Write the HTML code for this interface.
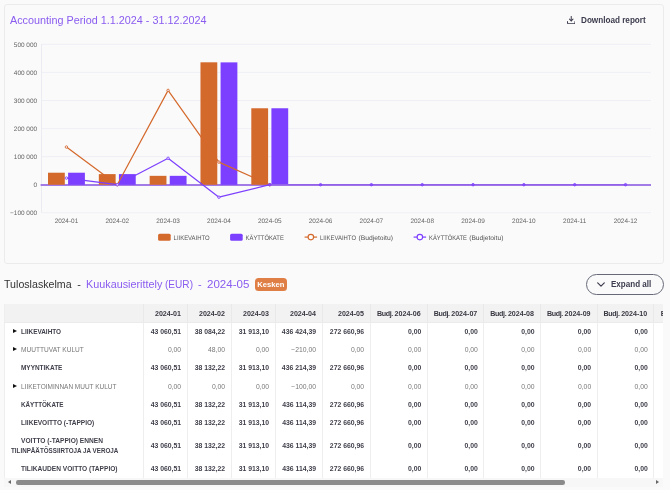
<!DOCTYPE html>
<html lang="en"><head><meta charset="utf-8"><title>Accounting Period report</title>
<style>
html,body{margin:0;padding:0;}
body{width:670px;height:490px;overflow:hidden;background:#fafafa;font-family:"Liberation Sans",sans-serif;color:#333;position:relative;}
#root{position:absolute;left:0;top:0;width:670px;height:490px;will-change:transform;}
.sx{display:inline-block;transform-origin:0 50%;white-space:nowrap;}
.card{position:absolute;left:4px;top:4px;width:658px;height:257.6px;border:1px solid #ebebeb;border-radius:3px;background:#fafafa;box-sizing:content-box;}
.title{position:absolute;left:9.7px;top:13px;font-size:11.3px;line-height:14px;color:#8a5cf0;white-space:nowrap;}
.title .sx{transform:scaleX(0.957);}
.dl{position:absolute;left:566.5px;top:14px;height:12px;display:flex;align-items:center;font-weight:bold;font-size:8.2px;color:#3b3b4d;white-space:nowrap;}
.dl svg{display:block;margin-right:5.8px;}
.dl .sx{transform:scaleX(0.995);}
svg.chart{position:absolute;left:0;top:0;}
svg.chart text{text-rendering:geometricPrecision;}
svg.chart text.ax{font-family:"Liberation Sans",sans-serif;font-size:6.45px;fill:#666;}
svg.chart text.lg{font-family:"Liberation Sans",sans-serif;font-size:6.6px;fill:#555;}
.h2{position:absolute;left:4px;top:276.5px;font-size:10.9px;line-height:14px;color:#333;white-space:nowrap;}
.h2 span{position:absolute;top:0;white-space:nowrap;transform-origin:0 50%;}
.h2 .p{color:#8a5cf0;}
.badge{position:absolute;left:254.5px;top:278px;width:32.6px;height:13.3px;border-radius:3.5px;background:#e07f45;color:#fff;font-weight:bold;font-size:7.6px;line-height:13.4px;text-align:center;}
.btn{position:absolute;left:585.5px;top:274.1px;width:76.4px;height:18.6px;border:1.1px solid #666a78;border-radius:11px;box-sizing:content-box;}
.btn svg{position:absolute;left:10.3px;top:7.1px;}
.btn span{position:absolute;left:24.1px;top:0;line-height:18.8px;font-weight:bold;font-size:8.3px;color:#3b3b4d;white-space:nowrap;transform:scaleX(0.97);transform-origin:0 50%;}
.wrap{position:absolute;left:4px;top:304px;width:658.6px;height:183px;overflow:hidden;}
table.tb{border-collapse:separate;border-spacing:0;table-layout:fixed;width:705.9px;background:#fff;font-size:6.95px;}
.tb th{background:#f2f2f2;height:18.4px;padding:1.3px 6.0px 0 0;text-align:right;font-weight:bold;font-size:7.1px;color:#393944;border-left:1px solid #e9e9e9;box-sizing:border-box;white-space:nowrap;overflow:hidden;}
.tb th .bj{letter-spacing:-0.36px;}
.tb th.first{border-left:1px solid #eeeeee;}
.tb td{height:18.2px;padding:0 5.9px 0 0;text-align:right;border-left:1px solid #eeeeee;box-sizing:border-box;white-space:nowrap;overflow:hidden;}
.tb tr.tall td{height:28.2px;}
.tb td:nth-child(n+7){padding-right:5.4px;}
.tb tbody tr:first-child td{border-top:1px solid #ebebeb;}
.tb td.first{text-align:left;padding:0;border-left:1px solid #eeeeee;}
.tb tr.b td{font-weight:bold;color:#3f3f4b;font-size:6.85px;}
.tb tr.g td{color:#787878;font-size:6.8px;}
.tb tr.g td.first{color:#777;}
.l1,.l2{padding-left:5.5px;line-height:9.8px;height:9.8px;white-space:nowrap;}
.lb{display:inline-block;transform-origin:0 50%;}
.tb tr.b .lb{font-size:6.7px;transform:scaleX(0.98);}
.tb tr.b .l2 .lb{transform:scaleX(0.937);}
.tb tr.g .lb{font-size:6.8px;transform:scaleX(0.98);}
.ar{display:inline-block;width:10.1px;height:4.8px;position:relative;vertical-align:-0.2px;}
.ar.on:after{content:"";position:absolute;left:2.7px;top:0;width:0;height:0;border-top:2.4px solid transparent;border-bottom:2.4px solid transparent;border-left:4px solid #111;}
.sb{position:absolute;left:4px;top:478px;width:658.6px;height:9px;background:#f7f7f7;}
.sb .thumb{position:absolute;left:11.5px;top:2.4px;width:549px;height:4.4px;border-radius:2.2px;background:#8b8b8b;}
.sb .la{position:absolute;left:3.9px;top:2.1px;width:0;height:0;border-top:2.4px solid transparent;border-bottom:2.4px solid transparent;border-right:3.5px solid #666;}
.sb .ra{position:absolute;right:3.3px;top:2.2px;width:0;height:0;border-top:2.3px solid transparent;border-bottom:2.3px solid transparent;border-left:3.5px solid #666;}
</style></head><body><div id="root">
<div class="card"></div>
<svg class="chart" width="670" height="264" viewBox="0 0 670 264">
<line x1="41.2" x2="651" y1="44.40" y2="44.40" stroke="#ededf5" stroke-width="0.9"/>
<text x="37.1" y="47.05" text-anchor="end" class="ax">500 000</text>
<line x1="41.2" x2="651" y1="72.45" y2="72.45" stroke="#ededf5" stroke-width="0.9"/>
<text x="37.1" y="75.10" text-anchor="end" class="ax">400 000</text>
<line x1="41.2" x2="651" y1="100.50" y2="100.50" stroke="#ededf5" stroke-width="0.9"/>
<text x="37.1" y="103.15" text-anchor="end" class="ax">300 000</text>
<line x1="41.2" x2="651" y1="128.55" y2="128.55" stroke="#ededf5" stroke-width="0.9"/>
<text x="37.1" y="131.20" text-anchor="end" class="ax">200 000</text>
<line x1="41.2" x2="651" y1="156.60" y2="156.60" stroke="#ededf5" stroke-width="0.9"/>
<text x="37.1" y="159.25" text-anchor="end" class="ax">100 000</text>
<line x1="41.2" x2="651" y1="184.65" y2="184.65" stroke="#ededf5" stroke-width="0.9"/>
<text x="37.1" y="186.90" text-anchor="end" class="ax">0</text>
<line x1="41.2" x2="651" y1="212.70" y2="212.70" stroke="#ededf5" stroke-width="0.9"/>
<text x="37.1" y="215.35" text-anchor="end" class="ax">−100 000</text>
<line x1="41.5" x2="41.5" y1="44.3" y2="212.9" stroke="#e9e9f0" stroke-width="0.9"/>
<line x1="40.6" x2="651" y1="184.9" y2="184.9" stroke="#a27be6" stroke-width="2"/>
<rect x="48.00" y="172.71" width="16.8" height="12.09" fill="#d4692c"/>
<rect x="68.10" y="172.71" width="16.8" height="12.09" fill="#7c3fff"/>
<rect x="98.83" y="174.11" width="16.8" height="10.69" fill="#d4692c"/>
<rect x="118.93" y="174.10" width="16.8" height="10.70" fill="#7c3fff"/>
<rect x="149.65" y="175.84" width="16.8" height="8.96" fill="#d4692c"/>
<rect x="169.75" y="175.84" width="16.8" height="8.96" fill="#7c3fff"/>
<rect x="200.48" y="62.30" width="16.8" height="122.50" fill="#d4692c"/>
<rect x="220.58" y="62.38" width="16.8" height="122.42" fill="#7c3fff"/>
<rect x="251.30" y="108.26" width="16.8" height="76.54" fill="#d4692c"/>
<rect x="271.40" y="108.26" width="16.8" height="76.54" fill="#7c3fff"/>
<polyline points="66.45,147.05 117.28,184.70 168.10,90.40 218.93,162.10 269.75,184.70" fill="none" stroke="#d4692c" stroke-width="1.2" stroke-linejoin="round"/>
<circle cx="66.45" cy="147.05" r="1.25" fill="#f6f0ff" fill-opacity="0.85" stroke="#d4692c" stroke-width="0.85"/>
<circle cx="117.28" cy="184.70" r="1.25" fill="#f6f0ff" fill-opacity="0.85" stroke="#d4692c" stroke-width="0.85"/>
<circle cx="168.10" cy="90.40" r="1.25" fill="#f6f0ff" fill-opacity="0.85" stroke="#d4692c" stroke-width="0.85"/>
<circle cx="218.93" cy="162.10" r="1.25" fill="#f6f0ff" fill-opacity="0.85" stroke="#d4692c" stroke-width="0.85"/>
<circle cx="269.75" cy="184.70" r="1.25" fill="#f6f0ff" fill-opacity="0.85" stroke="#d4692c" stroke-width="0.85"/>
<polyline points="269.75,184.70 320.57,184.70 371.40,184.70 422.23,184.70 473.05,184.70 523.88,184.70 574.70,184.70 625.53,184.70" fill="none" stroke="#9260ea" stroke-width="1.2" stroke-linejoin="round"/>
<circle cx="269.75" cy="184.70" r="1.25" fill="#7c3fff" fill-opacity="0.45" stroke="#7c3fff" stroke-width="0.85"/>
<circle cx="320.57" cy="184.70" r="1.25" fill="#7c3fff" fill-opacity="0.45" stroke="#7c3fff" stroke-width="0.85"/>
<circle cx="371.40" cy="184.70" r="1.25" fill="#7c3fff" fill-opacity="0.45" stroke="#7c3fff" stroke-width="0.85"/>
<circle cx="422.23" cy="184.70" r="1.25" fill="#7c3fff" fill-opacity="0.45" stroke="#7c3fff" stroke-width="0.85"/>
<circle cx="473.05" cy="184.70" r="1.25" fill="#7c3fff" fill-opacity="0.45" stroke="#7c3fff" stroke-width="0.85"/>
<circle cx="523.88" cy="184.70" r="1.25" fill="#7c3fff" fill-opacity="0.45" stroke="#7c3fff" stroke-width="0.85"/>
<circle cx="574.70" cy="184.70" r="1.25" fill="#7c3fff" fill-opacity="0.45" stroke="#7c3fff" stroke-width="0.85"/>
<circle cx="625.53" cy="184.70" r="1.25" fill="#7c3fff" fill-opacity="0.45" stroke="#7c3fff" stroke-width="0.85"/>
<polyline points="66.45,178.10 117.28,184.70 168.10,158.30 218.93,197.20 269.75,184.70" fill="none" stroke="#7c3fff" stroke-width="1.2" stroke-linejoin="round"/>
<circle cx="66.45" cy="178.10" r="1.25" fill="#f6f0ff" fill-opacity="0.85" stroke="#7c3fff" stroke-width="0.85"/>
<circle cx="117.28" cy="184.70" r="1.25" fill="#f6f0ff" fill-opacity="0.85" stroke="#7c3fff" stroke-width="0.85"/>
<circle cx="168.10" cy="158.30" r="1.25" fill="#f6f0ff" fill-opacity="0.85" stroke="#7c3fff" stroke-width="0.85"/>
<circle cx="218.93" cy="197.20" r="1.25" fill="#f6f0ff" fill-opacity="0.85" stroke="#7c3fff" stroke-width="0.85"/>
<text x="66.45" y="222.6" text-anchor="middle" class="ax">2024-01</text>
<text x="117.28" y="222.6" text-anchor="middle" class="ax">2024-02</text>
<text x="168.10" y="222.6" text-anchor="middle" class="ax">2024-03</text>
<text x="218.93" y="222.6" text-anchor="middle" class="ax">2024-04</text>
<text x="269.75" y="222.6" text-anchor="middle" class="ax">2024-05</text>
<text x="320.57" y="222.6" text-anchor="middle" class="ax">2024-06</text>
<text x="371.40" y="222.6" text-anchor="middle" class="ax">2024-07</text>
<text x="422.23" y="222.6" text-anchor="middle" class="ax">2024-08</text>
<text x="473.05" y="222.6" text-anchor="middle" class="ax">2024-09</text>
<text x="523.88" y="222.6" text-anchor="middle" class="ax">2024-10</text>
<text x="574.70" y="222.6" text-anchor="middle" class="ax">2024-11</text>
<text x="625.53" y="222.6" text-anchor="middle" class="ax">2024-12</text>
<rect x="158.1" y="233.7" width="12.6" height="7.1" rx="1.5" fill="#d4692c"/>
<text x="173.6" y="239.9" class="lg" textLength="36" lengthAdjust="spacingAndGlyphs">LIIKEVAIHTO</text>
<rect x="230.1" y="233.7" width="12.6" height="7.1" rx="1.5" fill="#7c3fff"/>
<text x="245.6" y="239.9" class="lg" textLength="38.2" lengthAdjust="spacingAndGlyphs">KÄYTTÖKATE</text>
<line x1="304.6" x2="317.1" y1="237.1" y2="237.1" stroke="#d4692c" stroke-width="1.2"/>
<circle cx="310.85" cy="237.1" r="2.75" fill="#fdfdfd" stroke="#d4692c" stroke-width="1.15"/>
<text x="320" y="239.9" class="lg" textLength="36" lengthAdjust="spacingAndGlyphs">LIIKEVAIHTO</text>
<text x="358.4" y="239.9" class="lg" textLength="34.6" lengthAdjust="spacingAndGlyphs">(Budjetoitu)</text>
<line x1="413.6" x2="426.1" y1="237.1" y2="237.1" stroke="#7c3fff" stroke-width="1.2"/>
<circle cx="419.85" cy="237.1" r="2.75" fill="#fdfdfd" stroke="#7c3fff" stroke-width="1.15"/>
<text x="429.1" y="239.9" class="lg" textLength="37.8" lengthAdjust="spacingAndGlyphs">KÄYTTÖKATE</text>
<text x="469.2" y="239.9" class="lg" textLength="34.2" lengthAdjust="spacingAndGlyphs">(Budjetoitu)</text>
</svg>
<div class="title"><span class="sx">Accounting Period 1.1.2024 - 31.12.2024</span></div>
<div class="dl"><svg width="8.5" height="8.5" viewBox="0 0 16 16" fill="none" stroke="#3b3b4d" stroke-width="1.9" stroke-linecap="round" stroke-linejoin="round"><path d="M8 1V9"/><path d="M4.7 5.9L8 9.2L11.3 5.9"/><path d="M1 10.2V12.7a2 2 0 0 0 2 2H13a2 2 0 0 0 2-2V10.2"/></svg><span class="sx">Download report</span></div>
<div class="h2"><span style="left:0;transform:scaleX(0.977)">Tuloslaskelma</span><span style="left:73.2px">-</span><span class="p" style="left:81.7px;transform:scaleX(0.993)">Kuukausierittely</span><span class="p" style="left:160.8px;transform:scaleX(0.926)">(EUR)</span><span class="p" style="left:194.1px">-</span><span class="p" style="left:203.4px;transform:scaleX(1.06)">2024-05</span></div>
<div class="badge">Kesken</div>
<div class="btn"><svg width="8" height="5" viewBox="0 0 8 5" fill="none" stroke="#3b3b4d" stroke-width="1.2" stroke-linecap="round" stroke-linejoin="round"><path d="M0.7 0.8L4 4.1L7.3 0.8"/></svg><span>Expand all</span></div>
<div class="wrap">
<table class="tb"><colgroup><col style="width:139px"><col style="width:44px"><col style="width:44px"><col style="width:44px"><col style="width:47px"><col style="width:48px"><col style="width:56.65px"><col style="width:56.65px"><col style="width:56.65px"><col style="width:56.65px"><col style="width:56.65px"><col style="width:56.65px"></colgroup>
<thead><tr><th class="first"></th><th>2024-01</th><th>2024-02</th><th>2024-03</th><th>2024-04</th><th>2024-05</th><th><span class="bj">Budj. </span>2024-06</th><th><span class="bj">Budj. </span>2024-07</th><th><span class="bj">Budj. </span>2024-08</th><th><span class="bj">Budj. </span>2024-09</th><th><span class="bj">Budj. </span>2024-10</th><th><span class="bj">Budj. </span>2024-11</th></tr></thead><tbody>
<tr class="b"><td class="first"><div class="l1"><i class="ar on"></i><span class="lb" style="transform:scaleX(0.96)">LIIKEVAIHTO</span></div></td><td>43 060,51</td><td>38 084,22</td><td>31 913,10</td><td>436 424,39</td><td>272 660,96</td><td>0,00</td><td>0,00</td><td>0,00</td><td>0,00</td><td>0,00</td><td>0,00</td></tr>
<tr class="g"><td class="first"><div class="l1"><i class="ar on"></i><span class="lb" style="transform:scaleX(0.968)">MUUTTUVAT KULUT</span></div></td><td>0,00</td><td>48,00</td><td>0,00</td><td>−210,00</td><td>0,00</td><td>0,00</td><td>0,00</td><td>0,00</td><td>0,00</td><td>0,00</td><td>0,00</td></tr>
<tr class="b"><td class="first"><div class="l1" style="position:relative;top:0.5px"><i class="ar"></i><span class="lb" style="transform:scaleX(0.963)">MYYNTIKATE</span></div></td><td>43 060,51</td><td>38 132,22</td><td>31 913,10</td><td>436 214,39</td><td>272 660,96</td><td>0,00</td><td>0,00</td><td>0,00</td><td>0,00</td><td>0,00</td><td>0,00</td></tr>
<tr class="g"><td class="first"><div class="l1" style="position:relative;top:0.9px"><i class="ar on"></i><span class="lb" style="transform:scaleX(0.953)">LIIKETOIMINNAN MUUT KULUT</span></div></td><td>0,00</td><td>0,00</td><td>0,00</td><td>−100,00</td><td>0,00</td><td>0,00</td><td>0,00</td><td>0,00</td><td>0,00</td><td>0,00</td><td>0,00</td></tr>
<tr class="b"><td class="first"><div class="l1" style="position:relative;top:0.6px"><i class="ar"></i><span class="lb" style="transform:scaleX(0.941)">KÄYTTÖKATE</span></div></td><td>43 060,51</td><td>38 132,22</td><td>31 913,10</td><td>436 114,39</td><td>272 660,96</td><td>0,00</td><td>0,00</td><td>0,00</td><td>0,00</td><td>0,00</td><td>0,00</td></tr>
<tr class="b"><td class="first"><div class="l1"><i class="ar"></i><span class="lb" style="transform:scaleX(0.98)">LIIKEVOITTO (-TAPPIO)</span></div></td><td>43 060,51</td><td>38 132,22</td><td>31 913,10</td><td>436 114,39</td><td>272 660,96</td><td>0,00</td><td>0,00</td><td>0,00</td><td>0,00</td><td>0,00</td><td>0,00</td></tr>
<tr class="b tall"><td class="first"><div class="l1"><i class="ar"></i><span class="lb" style="transform:scaleX(0.988)">VOITTO (-TAPPIO) ENNEN</span></div><div class="l2"><span class="lb" style="transform:scaleX(0.937)">TILINPÄÄTÖSSIIRTOJA JA VEROJA</span></div></td><td>43 060,51</td><td>38 132,22</td><td>31 913,10</td><td>436 114,39</td><td>272 660,96</td><td>0,00</td><td>0,00</td><td>0,00</td><td>0,00</td><td>0,00</td><td>0,00</td></tr>
<tr class="b"><td class="first"><div class="l1"><i class="ar"></i><span class="lb" style="transform:scaleX(0.987)">TILIKAUDEN VOITTO (TAPPIO)</span></div></td><td>43 060,51</td><td>38 132,22</td><td>31 913,10</td><td>436 114,39</td><td>272 660,96</td><td>0,00</td><td>0,00</td><td>0,00</td><td>0,00</td><td>0,00</td><td>0,00</td></tr>
</tbody></table>
</div>
<div class="sb"><div class="la"></div><div class="thumb"></div><div class="ra"></div></div>
</div></body></html>
